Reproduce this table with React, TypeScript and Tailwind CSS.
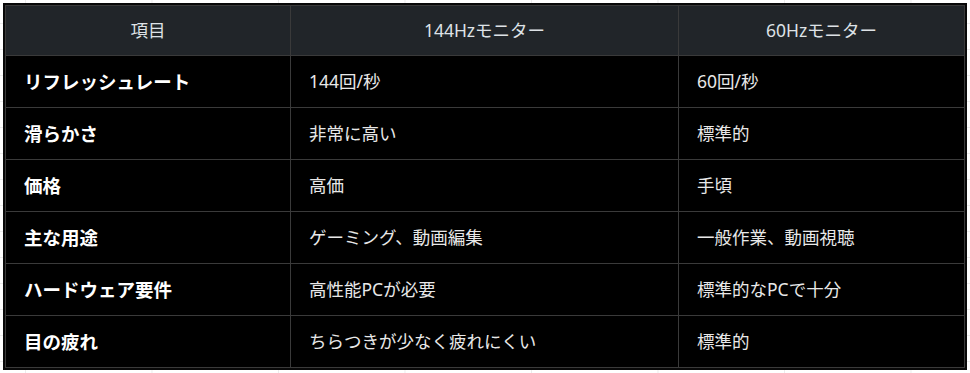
import React from 'react';

const rows = [
  { item: 'リフレッシュレート', hz144: '144回/秒', hz60: '60回/秒' },
  { item: '滑らかさ', hz144: '非常に高い', hz60: '標準的' },
  { item: '価格', hz144: '高価', hz60: '手頃' },
  { item: '主な用途', hz144: 'ゲーミング、動画編集', hz60: '一般作業、動画視聴' },
  { item: 'ハードウェア要件', hz144: '高性能PCが必要', hz60: '標準的なPCで十分' },
  { item: '目の疲れ', hz144: 'ちらつきが少なく疲れにくい', hz60: '標準的' },
];

export default function App() {
  return (
    <div
      className="min-h-[373px] w-full bg-white bg-[linear-gradient(to_right,#ececec_1px,transparent_1px),linear-gradient(to_bottom,#ececec_1px,transparent_1px)] bg-[size:126.5px_26px] bg-[position:25px_23px] pl-[3px] pt-[3px]"
      style={{ fontFamily: '"Noto Sans", "Noto Sans CJK JP", sans-serif' }}
    >
      <div className="w-[964px] bg-[#080808] p-[2px]">
        <div className="border border-[#3a3a3a] bg-black text-[17.5px] text-[#e8e8e8]">
          <div className="grid h-[49px] grid-cols-[285px_388px_1fr] bg-[#212529] text-[#dee2e6]">
            <div className="flex items-center justify-center border-r border-[#3a3a3a]">項目</div>
            <div className="flex items-center justify-center border-r border-[#3a3a3a]">144Hzモニター</div>
            <div className="flex items-center justify-center">60Hzモニター</div>
          </div>
          {rows.map((r, i) => (
            <div key={i} className="grid h-[52px] grid-cols-[285px_388px_1fr] border-t border-[#3a3a3a]">
              <div className="flex items-center border-r border-[#3a3a3a] pl-[18px] text-[18.5px] font-bold text-white">{r.item}</div>
              <div className="flex items-center border-r border-[#3a3a3a] pl-[18px]">{r.hz144}</div>
              <div className="flex items-center pl-[18px]">{r.hz60}</div>
            </div>
          ))}
        </div>
      </div>
    </div>
  );
}
